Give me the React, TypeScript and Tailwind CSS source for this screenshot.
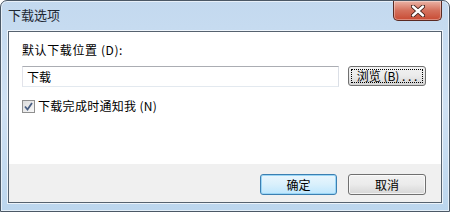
import React from "react";

const font = { fontFamily: '"Noto Sans CJK SC", "Liberation Sans", sans-serif' };

const CloseButton: React.FC = () => (
  <div className="w-[49px] h-[20px] rounded-b-[5px] border border-t-0 border-[#5a2a22] bg-gradient-to-b from-[#eab3a6] via-[#d4705c] to-[#c84a33] flex items-center justify-center shadow-[inset_0_0_0_1px_rgba(255,255,255,0.35)]">
    <svg width="14" height="12" viewBox="0 0 14 12">
      <path
        d="M2 1.5 L12 10.5 M12 1.5 L2 10.5"
        stroke="#3b1d18"
        strokeWidth="4.2"
        strokeLinecap="round"
      />
      <path
        d="M2 1.5 L12 10.5 M12 1.5 L2 10.5"
        stroke="#ffffff"
        strokeWidth="2.4"
        strokeLinecap="round"
      />
    </svg>
  </div>
);

const CheckBox: React.FC = () => (
  <div className="w-[13px] h-[13px] border border-[#8f8f8f] bg-gradient-to-br from-[#dcdcdc] to-[#f8f8f8] flex items-center justify-center">
    <svg width="9" height="9" viewBox="0 0 9 9">
      <path d="M1 4.5 L3.5 7.5 L8 1" fill="none" stroke="#4a5f83" strokeWidth="1.8" />
    </svg>
  </div>
);

export default function App() {
  return (
    <div
      style={font}
      className="w-[450px] h-[212px] rounded-t-[7px] border border-[#4b5866] bg-gradient-to-b from-[#c3d9ef] via-[#cfe1f3] to-[#bcd6ee] shadow-[inset_0_0_0_1px_rgba(255,255,255,0.6)] flex flex-col overflow-hidden text-[12px] text-black"
    >
      {/* Title bar */}
      <div className="h-[30px] flex justify-between pl-[7px] pr-[7px]">
        <span className="text-[13px] leading-[16px] mt-[6px] text-[#1e2733]">下载选项</span>
        <CloseButton />
      </div>

      {/* Client area */}
      <div className="mx-[7px] mb-[8px] flex-1 flex flex-col border border-[#56626f] shadow-[0_0_0_1px_rgba(255,255,255,0.7)]">
        <div className="flex-1 bg-white pl-[13px] pr-[15px] pt-[10px]">
          <div className="leading-[16px] tracking-[0.6px]">默认下载位置 (D):</div>
          <div className="flex items-start mt-[8px] gap-[9px]">
            <div className="w-[318px] h-[21px] border border-[#abadb3] border-l-[#e2e3ea] border-r-[#dbdfe6] border-b-[#e3e9ef] px-[4px] leading-[19px]">
              下载
            </div>
            <div className="w-[78px] h-[20px] rounded-[3px] border border-[#707070] bg-gradient-to-b from-[#f2f2f2] via-[#ebebeb] to-[#d4d4d4] p-[2px]">
              <div className="h-full border border-dotted border-black flex items-center justify-center leading-[14px] whitespace-nowrap">
                浏览 (B) . . .
              </div>
            </div>
          </div>
          <div className="flex items-center gap-[3px] mt-[11px] h-[16px]">
            <CheckBox />
            <span className="leading-[16px] tracking-[0.3px]">下载完成时通知我 (N)</span>
          </div>
        </div>
        <div className="h-[38px] bg-[#f0f0f0] flex justify-end items-start gap-[11px] pt-[10px] pr-[15px]">
          <div className="w-[77px] h-[21px] rounded-[3px] border border-[#3c7fb1] bg-gradient-to-b from-[#eaf6fd] via-[#d9f0fc] to-[#bee6fd] shadow-[inset_0_0_0_1px_#9ad6f6] flex items-center justify-center leading-[14px]">
            确定
          </div>
          <div className="w-[78px] h-[21px] rounded-[3px] border border-[#707070] bg-gradient-to-b from-[#f2f2f2] via-[#ebebeb] to-[#d6d6d6] shadow-[inset_0_0_0_1px_rgba(255,255,255,0.7)] flex items-center justify-center leading-[14px]">
            取消
          </div>
        </div>
      </div>
    </div>
  );
}
